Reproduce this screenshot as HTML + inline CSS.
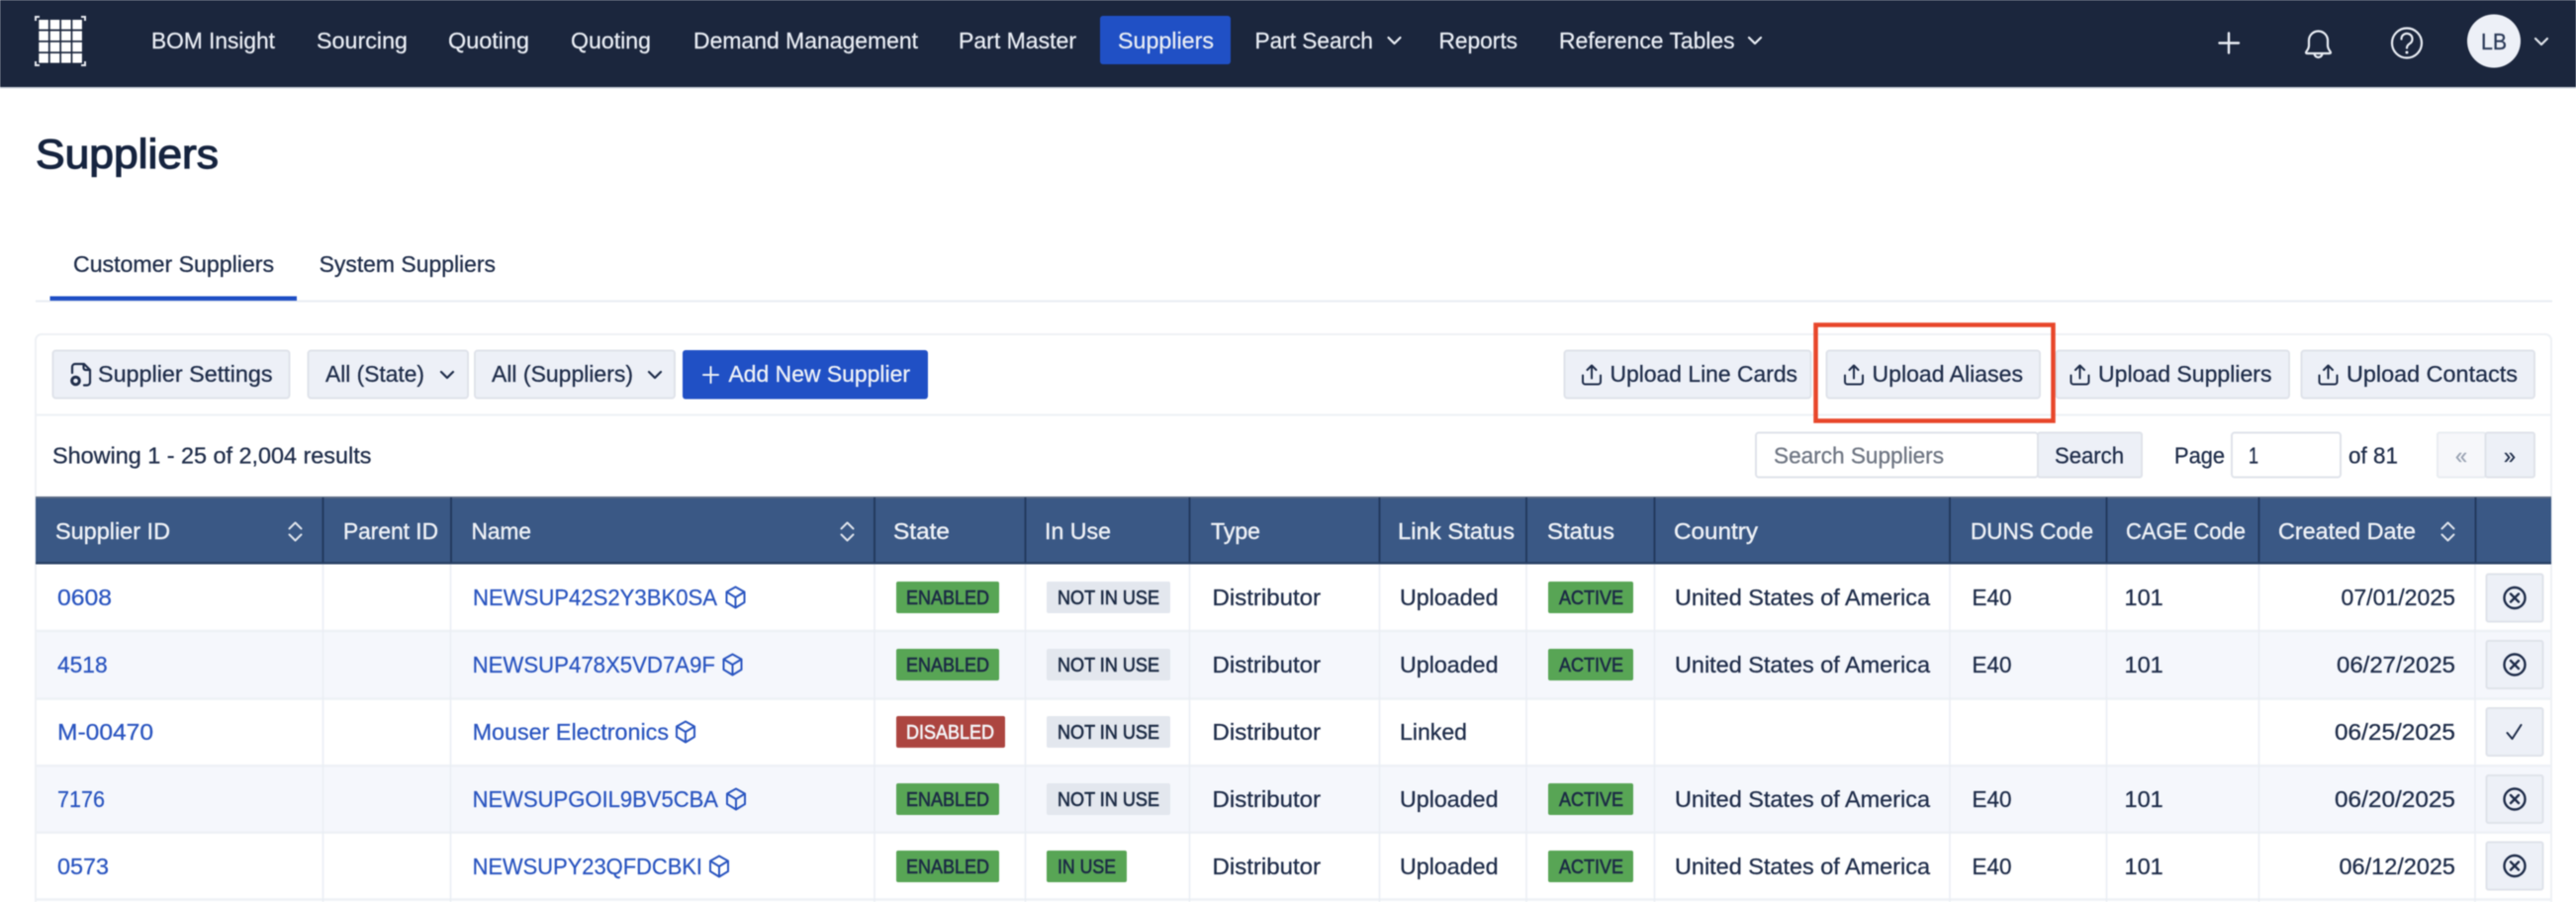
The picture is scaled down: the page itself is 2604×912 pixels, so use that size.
<!DOCTYPE html>
<html lang="en"><head><meta charset="utf-8"><title>Suppliers</title>
<style>
html,body{margin:0;padding:0;width:2604px;height:912px;overflow:hidden;background:#fff}
svg{display:block;filter:blur(.45px)}
text{font-family:"Liberation Sans",Arial,sans-serif;font-size:23.5px;color:#1f2d4a;fill:currentColor;stroke:currentColor;stroke-width:.3px;white-space:pre}
.n{color:#e9edf4;font-size:23.5px;stroke-width:.25px}
.h{color:#eef1f6;stroke-width:.4px}
.l{color:#2a55c0;stroke-width:.25px}
.b{font-size:20px;color:#1c2b45;stroke-width:.6px}
.btn{fill:#edf0f7;stroke:#dfe3ea;stroke-width:2}
.ic{fill:none;stroke:#1f2d4a;stroke-width:2;stroke-linecap:round;stroke-linejoin:round}
.cube{fill:none;stroke:#2a55c0;stroke-width:2;stroke-linejoin:round}
.ghl{stroke:#233a5e;stroke-width:2}
</style></head><body>
<svg xmlns="http://www.w3.org/2000/svg" width="2604" height="912" viewBox="0 0 2604 912">
<defs>
<g id="upl" class="ic"><path d="M1 11v6.500a2.500 2.500 0 0 0 2.500 2.500h13a2.500 2.500 0 0 0 2.500-2.500V11M10 14V1M5.500 5.500 10 1l4.500 4.500"/></g>
<g id="cube" class="cube"><path d="M11 1 20 6v10.500L11 22 2 16.500V6ZM2 6l9 5.500L20 6M11 11.500V22"/></g>
<g id="x"><circle cx="0" cy="0" r="10.500" fill="none" stroke="#1f2d4a" stroke-width="2.400"/><path d="M-4-4 4 4M4-4-4 4" fill="none" stroke="#1f2d4a" stroke-width="2.400" stroke-linecap="round"/></g>
<g id="sort" fill="none" stroke-width="2" stroke-linecap="round" stroke-linejoin="round"><path d="M-6-3 0-9 6-3M-6 3 0 9 6 3"/></g>
<path id="chev" d="M-6-3 0 3 6-3" fill="none" stroke-width="2.200" stroke-linecap="round" stroke-linejoin="round"/>
</defs>

<!-- nav -->
<rect width="2604" height="88" fill="#1b263d"/>
<rect y="88" width="2604" height="1.500" fill="#cfd4dd"/>
<g fill="#fff">
<rect x="39.300" y="20" width="9.600" height="9.600"/><rect x="50.700" y="20" width="9.600" height="9.600"/><rect x="62" y="20" width="9.600" height="9.600"/><rect x="73.300" y="20" width="9.600" height="9.600"/>
<rect x="39.300" y="31.400" width="9.600" height="9.600"/><rect x="50.700" y="31.400" width="9.600" height="9.600"/><rect x="62" y="31.400" width="9.600" height="9.600"/><rect x="73.300" y="31.400" width="9.600" height="9.600"/>
<rect x="39.300" y="42.700" width="9.600" height="9.600"/><rect x="50.700" y="42.700" width="9.600" height="9.600"/><rect x="62" y="42.700" width="9.600" height="9.600"/><rect x="73.300" y="42.700" width="9.600" height="9.600"/>
<rect x="39.300" y="54" width="9.600" height="9.600"/><rect x="50.700" y="54" width="9.600" height="9.600"/><rect x="62" y="54" width="9.600" height="9.600"/><rect x="73.300" y="54" width="9.600" height="9.600"/>
</g>
<path d="M36 21v-4h4M86 21v-4h-4M36 62v4h4M86 62v4h-4" fill="none" stroke="#e6e9ef" stroke-width="2"/>
<rect x="1112" y="16" width="132" height="49" rx="3" fill="#2050c5"/>
<text class="n" x="153" y="49" textLength="125" lengthAdjust="spacingAndGlyphs">BOM Insight</text>
<text class="n" x="320" y="49" textLength="92" lengthAdjust="spacingAndGlyphs">Sourcing</text>
<text class="n" x="453" y="49" textLength="82" lengthAdjust="spacingAndGlyphs">Quoting</text>
<text class="n" x="577" y="49" textLength="81" lengthAdjust="spacingAndGlyphs">Quoting</text>
<text class="n" x="701" y="49" textLength="227" lengthAdjust="spacingAndGlyphs">Demand Management</text>
<text class="n" x="969" y="49" textLength="119" lengthAdjust="spacingAndGlyphs">Part Master</text>
<text class="n" x="1130" y="49" textLength="97" lengthAdjust="spacingAndGlyphs">Suppliers</text>
<text class="n" x="1268.500" y="49" textLength="119.500" lengthAdjust="spacingAndGlyphs">Part Search</text>
<use href="#chev" x="1409.500" y="41" stroke="#e9edf4"/>
<text class="n" x="1454.500" y="49" textLength="79.500" lengthAdjust="spacingAndGlyphs">Reports</text>
<text class="n" x="1576" y="49" textLength="177.600" lengthAdjust="spacingAndGlyphs">Reference Tables</text>
<use href="#chev" x="1774" y="41" stroke="#e9edf4"/>
<path d="M2253 33.500v20M2243.500 43.500h19.500" stroke="#e9edf4" stroke-width="2.400" stroke-linecap="round" fill="none"/>
<path d="M2331 53c0-1 3-3 3-7v-5a9.500 9.500 0 0 1 19 0v5c0 4 3 6 3 7 0 .8-.5 1-1.500 1h-22c-1 0-1.500-.2-1.500-1ZM2339.500 54a4 4 0 0 0 8 0" fill="none" stroke="#e9edf4" stroke-width="2.200"/>
<circle cx="2433" cy="43.500" r="15" fill="none" stroke="#e9edf4" stroke-width="2.200"/>
<path d="M2427.500 39.500a5.500 5.500 0 1 1 8.500 4.500c-2 1.300-3 2.500-3 4.500" fill="none" stroke="#e9edf4" stroke-width="2.200" stroke-linecap="round"/>
<circle cx="2433" cy="53" r="1.500" fill="#e9edf4"/>
<circle cx="2521" cy="41.500" r="27" fill="#edf0f7"/>
<text x="2508" y="50" textLength="26" lengthAdjust="spacingAndGlyphs" style="font-size:23px;color:#2b3a58">LB</text>
<use href="#chev" x="2569" y="42" stroke="#dfe3ea"/>

<!-- title & tabs -->
<text x="36" y="170" textLength="185" lengthAdjust="spacingAndGlyphs" style="font-size:42px;color:#16243f;stroke-width:1.2px">Suppliers</text>
<text x="74" y="275" textLength="203" lengthAdjust="spacingAndGlyphs">Customer Suppliers</text>
<text x="322.600" y="275" textLength="178.400" lengthAdjust="spacingAndGlyphs">System Suppliers</text>
<rect x="36" y="303.500" width="2544" height="2" fill="#e9edf3"/>
<rect x="50.500" y="299.500" width="249.500" height="4.500" fill="#2050c5"/>

<!-- panel -->
<path d="M36 912V344a6 6 0 0 1 6-6H2573a6 6 0 0 1 6 6V912" fill="#fff" stroke="#eef1f5" stroke-width="2"/>
<rect x="36" y="418.500" width="2543" height="2" fill="#eef1f5"/>

<rect class="btn" x="53.500" y="354.500" width="239" height="48" rx="3"/>
<path d="M73 377v-6a3 3 0 0 1 3-3h9l6 6v12.500a3 3 0 0 1-3 3h-3M84.500 368.500v3.500a2 2 0 0 0 2 2h4" class="ic" style="stroke-width:2.200"/><circle cx="76.500" cy="385" r="3.800" fill="none" stroke="#1f2d4a" stroke-width="3"/>
<text x="99" y="386" textLength="176.500" lengthAdjust="spacingAndGlyphs">Supplier Settings</text>
<rect class="btn" x="311.500" y="354.500" width="161.500" height="48" rx="3"/>
<text x="329" y="386" textLength="100" lengthAdjust="spacingAndGlyphs">All (State)</text>
<use href="#chev" x="452" y="379" stroke="#1f2d4a"/>
<rect class="btn" x="480" y="354.500" width="202" height="48" rx="3"/>
<text x="497" y="386" textLength="143" lengthAdjust="spacingAndGlyphs">All (Suppliers)</text>
<use href="#chev" x="662" y="379" stroke="#1f2d4a"/>
<rect x="690" y="354" width="248" height="49.500" rx="3" fill="#2050c5"/>
<path d="M718.500 371v16M711 379h15" stroke="#e9edf4" stroke-width="2" stroke-linecap="round"/>
<text x="736.500" y="386" textLength="183.500" lengthAdjust="spacingAndGlyphs" style="color:#eef1f7">Add New Supplier</text>

<rect class="btn" x="1581.500" y="354.500" width="249" height="48" rx="3"/>
<use href="#upl" x="1599" y="368.500"/>
<text x="1627.500" y="386" textLength="189.500" lengthAdjust="spacingAndGlyphs">Upload Line Cards</text>
<rect class="btn" x="1846.500" y="354.500" width="215.500" height="48" rx="3"/>
<use href="#upl" x="1864" y="368.500"/>
<text x="1892.500" y="386" textLength="152.500" lengthAdjust="spacingAndGlyphs">Upload Aliases</text>
<rect class="btn" x="2078.500" y="354.500" width="235.500" height="48" rx="3"/>
<use href="#upl" x="2092.500" y="368.500"/>
<text x="2121" y="386" textLength="175.500" lengthAdjust="spacingAndGlyphs">Upload Suppliers</text>
<rect class="btn" x="2326.500" y="354.500" width="235.500" height="48" rx="3"/>
<use href="#upl" x="2343.500" y="368.500"/>
<text x="2372" y="386" textLength="173" lengthAdjust="spacingAndGlyphs">Upload Contacts</text>
<rect x="1835.500" y="328.500" width="240" height="97" fill="none" stroke="#e8472b" stroke-width="4.500"/>

<!-- results row -->
<text x="53" y="468.500" textLength="322.400" lengthAdjust="spacingAndGlyphs">Showing 1 - 25 of 2,004 results</text>
<rect x="1775" y="437.500" width="285" height="45" rx="3" fill="#fff" stroke="#dfe3ea" stroke-width="2"/>
<text x="1793" y="468.500" textLength="172" lengthAdjust="spacingAndGlyphs" style="color:#6f7683">Search Suppliers</text>
<rect class="btn" x="2060" y="437.500" width="105" height="45" rx="2"/>
<text x="2077" y="468.500" textLength="70" lengthAdjust="spacingAndGlyphs">Search</text>
<text x="2198" y="468.500" textLength="51" lengthAdjust="spacingAndGlyphs">Page</text>
<rect x="2256" y="437.500" width="110" height="45" rx="3" fill="#fff" stroke="#dfe3ea" stroke-width="2"/>
<text x="2273" y="468.500" textLength="10" lengthAdjust="spacingAndGlyphs">1</text>
<text x="2374" y="468.500" textLength="50" lengthAdjust="spacingAndGlyphs">of 81</text>
<rect x="2464" y="437.500" width="48.500" height="45" rx="2" fill="#f6f7fa" stroke="#e9ecf1" stroke-width="2"/>
<rect class="btn" x="2512.500" y="437.500" width="49.500" height="45" rx="2"/>
<text x="2482" y="468.500" textLength="12" lengthAdjust="spacingAndGlyphs" style="color:#9aa3b3">«</text>
<text x="2531" y="468.500" textLength="12" lengthAdjust="spacingAndGlyphs">»</text>

<!-- table rows -->
<rect x="37" y="638" width="2541" height="68.500" fill="#f5f7fc"/>
<rect x="37" y="774" width="2541" height="68" fill="#f5f7fc"/>
<path d="M36 638h2543M36 706.500h2543M36 774.300h2543M36 841.800h2543M36 909.500h2543" stroke="#eef1f6" stroke-width="2.500"/>
<path d="M326.500 570V912M455.500 570V912M884 570V912M1036.500 570V912M1202.500 570V912M1394.500 570V912M1543 570V912M1672.500 570V912M1971 570V912M2129.500 570V912M2283.500 570V912M2502 570V912" stroke="#eaeef4" stroke-width="1.500"/>

<!-- header -->
<rect x="36" y="502" width="2543" height="68" fill="#3a5885"/>
<rect x="36" y="502" width="2543" height="2" fill="#5a6a84"/>
<rect x="36" y="568" width="2543" height="2.500" fill="#2a4266"/>
<path class="ghl" d="M326.500 503V569M456 503V569M884 503V569M1036.500 503V569M1202.500 503V569M1394.500 503V569M1543 503V569M1672.500 503V569M1971 503V569M2129.500 503V569M2283.500 503V569M2502.500 503V569"/>
<text class="h" x="56" y="545" textLength="116" lengthAdjust="spacingAndGlyphs">Supplier ID</text>
<use href="#sort" x="298.500" y="537.500" stroke="#dfe4ec"/>
<text class="h" x="347" y="545" textLength="96" lengthAdjust="spacingAndGlyphs">Parent ID</text>
<text class="h" x="476.500" y="545" textLength="60.500" lengthAdjust="spacingAndGlyphs">Name</text>
<use href="#sort" x="856.500" y="537.500" stroke="#dfe4ec"/>
<text class="h" x="903" y="545" textLength="57" lengthAdjust="spacingAndGlyphs">State</text>
<text class="h" x="1056" y="545" textLength="67" lengthAdjust="spacingAndGlyphs">In Use</text>
<text class="h" x="1224" y="545" textLength="50" lengthAdjust="spacingAndGlyphs">Type</text>
<text class="h" x="1413" y="545" textLength="118" lengthAdjust="spacingAndGlyphs">Link Status</text>
<text class="h" x="1564" y="545" textLength="68" lengthAdjust="spacingAndGlyphs">Status</text>
<text class="h" x="1692" y="545" textLength="85" lengthAdjust="spacingAndGlyphs">Country</text>
<text class="h" x="1992" y="545" textLength="124" lengthAdjust="spacingAndGlyphs">DUNS Code</text>
<text class="h" x="2149" y="545" textLength="121" lengthAdjust="spacingAndGlyphs">CAGE Code</text>
<text class="h" x="2303" y="545" textLength="139" lengthAdjust="spacingAndGlyphs">Created Date</text>
<use href="#sort" x="2474.500" y="537.500" stroke="#dfe4ec"/>

<!-- row 1 -->
<text class="l" x="58" y="612" textLength="55" lengthAdjust="spacingAndGlyphs">0608</text>
<text class="l" x="478" y="612" textLength="247" lengthAdjust="spacingAndGlyphs">NEWSUP42S2Y3BK0SA</text>
<use href="#cube" x="732.500" y="592.500"/>
<rect x="906" y="588" width="104" height="32" rx="2" fill="#58a555"/>
<text class="b" x="916" y="611" textLength="84" lengthAdjust="spacingAndGlyphs">ENABLED</text>
<rect x="1058" y="588" width="125" height="32" rx="2" fill="#e3e7ee"/>
<text class="b" x="1069" y="611" textLength="103" lengthAdjust="spacingAndGlyphs">NOT IN USE</text>
<text x="1225.500" y="612" textLength="109.500" lengthAdjust="spacingAndGlyphs">Distributor</text>
<text x="1415" y="612" textLength="99.500" lengthAdjust="spacingAndGlyphs">Uploaded</text>
<rect x="1565" y="588" width="86" height="32" rx="2" fill="#58a555"/>
<text class="b" x="1576" y="611" textLength="65" lengthAdjust="spacingAndGlyphs">ACTIVE</text>
<text x="1693" y="612" textLength="258" lengthAdjust="spacingAndGlyphs">United States of America</text>
<text x="1993.500" y="612" textLength="40" lengthAdjust="spacingAndGlyphs">E40</text>
<text x="2147.500" y="612">101</text>
<text x="2366.500" y="612" textLength="115.500" lengthAdjust="spacingAndGlyphs">07/01/2025</text>
<rect class="btn" x="2513.500" y="580.500" width="57" height="48" rx="2"/>
<use href="#x" x="2542" y="604.500"/>

<!-- row 2 -->
<text class="l" x="58" y="680" textLength="50.600" lengthAdjust="spacingAndGlyphs">4518</text>
<text class="l" x="477.600" y="680" textLength="245.400" lengthAdjust="spacingAndGlyphs">NEWSUP478X5VD7A9F</text>
<use href="#cube" x="729.500" y="660.500"/>
<rect x="906" y="656" width="104" height="32" rx="2" fill="#58a555"/>
<text class="b" x="916" y="679" textLength="84" lengthAdjust="spacingAndGlyphs">ENABLED</text>
<rect x="1058" y="656" width="125" height="32" rx="2" fill="#e3e7ee"/>
<text class="b" x="1069" y="679" textLength="103" lengthAdjust="spacingAndGlyphs">NOT IN USE</text>
<text x="1225.500" y="680" textLength="109.500" lengthAdjust="spacingAndGlyphs">Distributor</text>
<text x="1415" y="680" textLength="99.500" lengthAdjust="spacingAndGlyphs">Uploaded</text>
<rect x="1565" y="656" width="86" height="32" rx="2" fill="#58a555"/>
<text class="b" x="1576" y="679" textLength="65" lengthAdjust="spacingAndGlyphs">ACTIVE</text>
<text x="1693" y="680" textLength="258" lengthAdjust="spacingAndGlyphs">United States of America</text>
<text x="1993.500" y="680" textLength="40" lengthAdjust="spacingAndGlyphs">E40</text>
<text x="2147.500" y="680">101</text>
<text x="2362" y="680" textLength="120" lengthAdjust="spacingAndGlyphs">06/27/2025</text>
<rect class="btn" x="2513.500" y="648" width="57" height="48" rx="2"/>
<use href="#x" x="2542" y="672"/>

<!-- row 3 -->
<text class="l" x="58" y="748" textLength="97" lengthAdjust="spacingAndGlyphs">M-00470</text>
<text class="l" x="477.600" y="748" textLength="198.400" lengthAdjust="spacingAndGlyphs">Mouser Electronics</text>
<use href="#cube" x="682" y="728.500"/>
<rect x="906" y="724" width="110" height="32" rx="2" fill="#ac4540"/>
<text class="b" x="916" y="747" textLength="89" lengthAdjust="spacingAndGlyphs" style="color:#f4f5f8">DISABLED</text>
<rect x="1058" y="724" width="125" height="32" rx="2" fill="#e3e7ee"/>
<text class="b" x="1069" y="747" textLength="103" lengthAdjust="spacingAndGlyphs">NOT IN USE</text>
<text x="1225.500" y="748" textLength="109.500" lengthAdjust="spacingAndGlyphs">Distributor</text>
<text x="1415" y="748" textLength="68" lengthAdjust="spacingAndGlyphs">Linked</text>
<text x="2360" y="748" textLength="122" lengthAdjust="spacingAndGlyphs">06/25/2025</text>
<rect class="btn" x="2513.500" y="716" width="57" height="48" rx="2"/>
<path d="M2534.500 741l5 6 9-14" fill="none" stroke="#1f2d4a" stroke-width="2" stroke-linecap="round" stroke-linejoin="round"/>

<!-- row 4 -->
<text class="l" x="58" y="816" textLength="48" lengthAdjust="spacingAndGlyphs">7176</text>
<text class="l" x="477.600" y="816" textLength="248.400" lengthAdjust="spacingAndGlyphs">NEWSUPGOIL9BV5CBA</text>
<use href="#cube" x="733" y="796.500"/>
<rect x="906" y="792" width="104" height="32" rx="2" fill="#58a555"/>
<text class="b" x="916" y="815" textLength="84" lengthAdjust="spacingAndGlyphs">ENABLED</text>
<rect x="1058" y="792" width="125" height="32" rx="2" fill="#e3e7ee"/>
<text class="b" x="1069" y="815" textLength="103" lengthAdjust="spacingAndGlyphs">NOT IN USE</text>
<text x="1225.500" y="816" textLength="109.500" lengthAdjust="spacingAndGlyphs">Distributor</text>
<text x="1415" y="816" textLength="99.500" lengthAdjust="spacingAndGlyphs">Uploaded</text>
<rect x="1565" y="792" width="86" height="32" rx="2" fill="#58a555"/>
<text class="b" x="1576" y="815" textLength="65" lengthAdjust="spacingAndGlyphs">ACTIVE</text>
<text x="1693" y="816" textLength="258" lengthAdjust="spacingAndGlyphs">United States of America</text>
<text x="1993.500" y="816" textLength="40" lengthAdjust="spacingAndGlyphs">E40</text>
<text x="2147.500" y="816">101</text>
<text x="2360" y="816" textLength="122" lengthAdjust="spacingAndGlyphs">06/20/2025</text>
<rect class="btn" x="2513.500" y="784" width="57" height="48" rx="2"/>
<use href="#x" x="2542" y="808"/>

<!-- row 5 -->
<text class="l" x="58" y="884" textLength="52" lengthAdjust="spacingAndGlyphs">0573</text>
<text class="l" x="477.600" y="884" textLength="232.400" lengthAdjust="spacingAndGlyphs">NEWSUPY23QFDCBKI</text>
<use href="#cube" x="716" y="864.500"/>
<rect x="906" y="860" width="104" height="32" rx="2" fill="#58a555"/>
<text class="b" x="916" y="883" textLength="84" lengthAdjust="spacingAndGlyphs">ENABLED</text>
<rect x="1058" y="860" width="81" height="32" rx="2" fill="#58a555"/>
<text class="b" x="1069" y="883" textLength="59" lengthAdjust="spacingAndGlyphs">IN USE</text>
<text x="1225.500" y="884" textLength="109.500" lengthAdjust="spacingAndGlyphs">Distributor</text>
<text x="1415" y="884" textLength="99.500" lengthAdjust="spacingAndGlyphs">Uploaded</text>
<rect x="1565" y="860" width="86" height="32" rx="2" fill="#58a555"/>
<text class="b" x="1576" y="883" textLength="65" lengthAdjust="spacingAndGlyphs">ACTIVE</text>
<text x="1693" y="884" textLength="258" lengthAdjust="spacingAndGlyphs">United States of America</text>
<text x="1993.500" y="884" textLength="40" lengthAdjust="spacingAndGlyphs">E40</text>
<text x="2147.500" y="884">101</text>
<text x="2364.500" y="884" textLength="117.500" lengthAdjust="spacingAndGlyphs">06/12/2025</text>
<rect class="btn" x="2513.500" y="851.500" width="57" height="48" rx="2"/>
<use href="#x" x="2542" y="875.500"/>
</svg>
</body></html>
